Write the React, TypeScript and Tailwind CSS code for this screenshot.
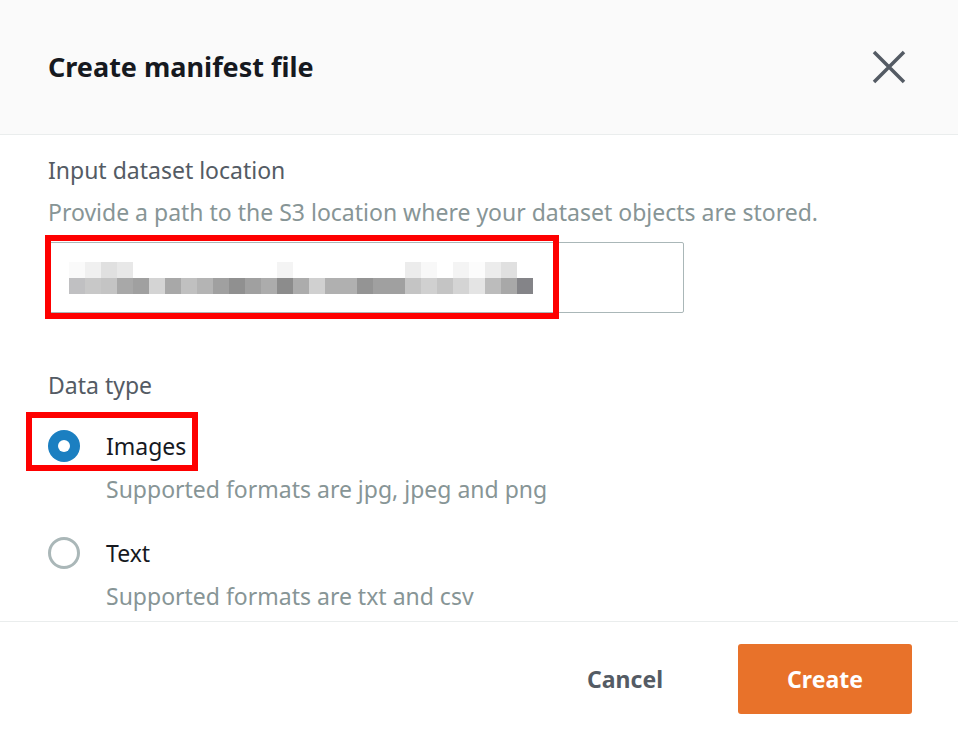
const FONT = "font-['Noto_Sans',_'Liberation_Sans',_sans-serif]";

// pixelated (redacted) bucket path, two rows of 16px blocks
const TOP_ROW = [
  "bg-[#fafafa]", "bg-[#f0f0f0]", "bg-[#e0e0e0]", "bg-[#e8e8e8]", "bg-white", "bg-white",
  "bg-white", "bg-white", "bg-white", "bg-white", "bg-white", "bg-white", "bg-white",
  "bg-[#f4f4f4]", "bg-white", "bg-white", "bg-white", "bg-white", "bg-white", "bg-white",
  "bg-white", "bg-[#ececec]", "bg-[#f8f8f8]", "bg-white", "bg-[#f4f4f4]", "bg-[#fcfcfc]",
  "bg-[#ececec]", "bg-[#e0e0e0]", "bg-white",
];
const BOTTOM_ROW = [
  "bg-[#c0c0c2]", "bg-[#c8c8c8]", "bg-[#c4c4c4]", "bg-[#a8a8a8]", "bg-[#a0a0a0]", "bg-[#d4d4d4]",
  "bg-[#a8a8a8]", "bg-[#c0c0c0]", "bg-[#b4b4b4]", "bg-[#a0a0a0]", "bg-[#909090]", "bg-[#a0a0a0]",
  "bg-[#acacac]", "bg-[#8c8c8c]", "bg-[#acacac]", "bg-[#d0d0d0]", "bg-[#b0b0b0]", "bg-[#b0b0b0]",
  "bg-[#949494]", "bg-[#a0a0a0]", "bg-[#a0a0a0]", "bg-[#c4c4c4]", "bg-[#d0d0d0]", "bg-[#c4c4c4]",
  "bg-[#d4d4d4]", "bg-[#e4e4e4]", "bg-[#bcbcbc]", "bg-[#a8a8a8]", "bg-[#848488]",
];

const Radio = ({ checked }: { checked: boolean }) =>
  checked ? (
    <span className="flex h-[32px] w-[32px] shrink-0 items-center justify-center rounded-full bg-[#1b7fc1]">
      <span className="h-[12px] w-[12px] rounded-full bg-white" />
    </span>
  ) : (
    <span className="h-[32px] w-[32px] shrink-0 rounded-full border-[3px] border-[#aab7b8] bg-white" />
  );

const CloseIcon = () => (
  <svg width="34" height="34" viewBox="0 0 34 34" className="text-[#545b64]">
    <path d="M2 2 L32 32 M32 2 L2 32" stroke="currentColor" strokeWidth="3.5" fill="none" />
  </svg>
);

const App = () => {
  return (
    <div className={`${FONT} flex h-[736px] w-[958px] flex-col bg-white`}>
      <header className="flex h-[135px] shrink-0 items-center justify-between border-b border-[#eaeded] bg-[#fafafa] pl-[48px] pr-[52px]">
        <h1 className="text-[27px] font-bold leading-[36px] text-[#16191f]">Create manifest file</h1>
        <CloseIcon />
      </header>

      <main className="flex flex-1 flex-col px-[48px] pt-[21px] text-[23px] leading-[28px]">
        <label className="text-[#545b64]">Input dataset location</label>
        <p className="mt-[14px] whitespace-nowrap text-[#879596]">
          Provide a path to the S3 location where your dataset objects are stored.
        </p>

        <div className="relative mt-[16px] h-[71px] w-[636px] rounded-[2px] border border-[#aab7b8] bg-white pl-[20px] pt-[19px]">
          <div className="flex">
            {TOP_ROW.map((c, i) => (
              <span key={i} className={`h-[16px] w-[16px] ${c}`} />
            ))}
          </div>
          <div className="flex">
            {BOTTOM_ROW.map((c, i) => (
              <span key={i} className={`h-[16px] w-[16px] ${c}`} />
            ))}
          </div>
          <div className="pointer-events-none absolute -left-[4px] -top-[8px] h-[84px] w-[514px] border-[6px] border-[#fe0000]" />
        </div>

        <label className="mt-[58px] text-[#545b64]">Data type</label>

        <div className="relative mt-[31px] flex items-center gap-[26px]">
          <Radio checked />
          <span className="text-[#16191f]">Images</span>
          <div className="pointer-events-none absolute -left-[22px] -top-[18px] h-[59px] w-[172px] border-[6px] border-[#fe0000]" />
        </div>
        <p className="ml-[58px] mt-[13px] text-[#879596]">Supported formats are jpg, jpeg and png</p>

        <div className="mt-[34px] flex items-center gap-[26px]">
          <Radio checked={false} />
          <span className="text-[#16191f]">Text</span>
        </div>
        <p className="ml-[58px] mt-[13px] text-[#879596]">Supported formats are txt and csv</p>
      </main>

      <footer className="flex h-[115px] shrink-0 items-center justify-end gap-[75px] border-t border-[#eaeded] pr-[46px]">
        <button className="text-[23px] font-bold text-[#545b64]">Cancel</button>
        <button className="h-[70px] w-[174px] rounded-[3px] bg-[#e8722a] text-[23px] font-bold text-white">
          Create
        </button>
      </footer>
    </div>
  );
};

export default App;
